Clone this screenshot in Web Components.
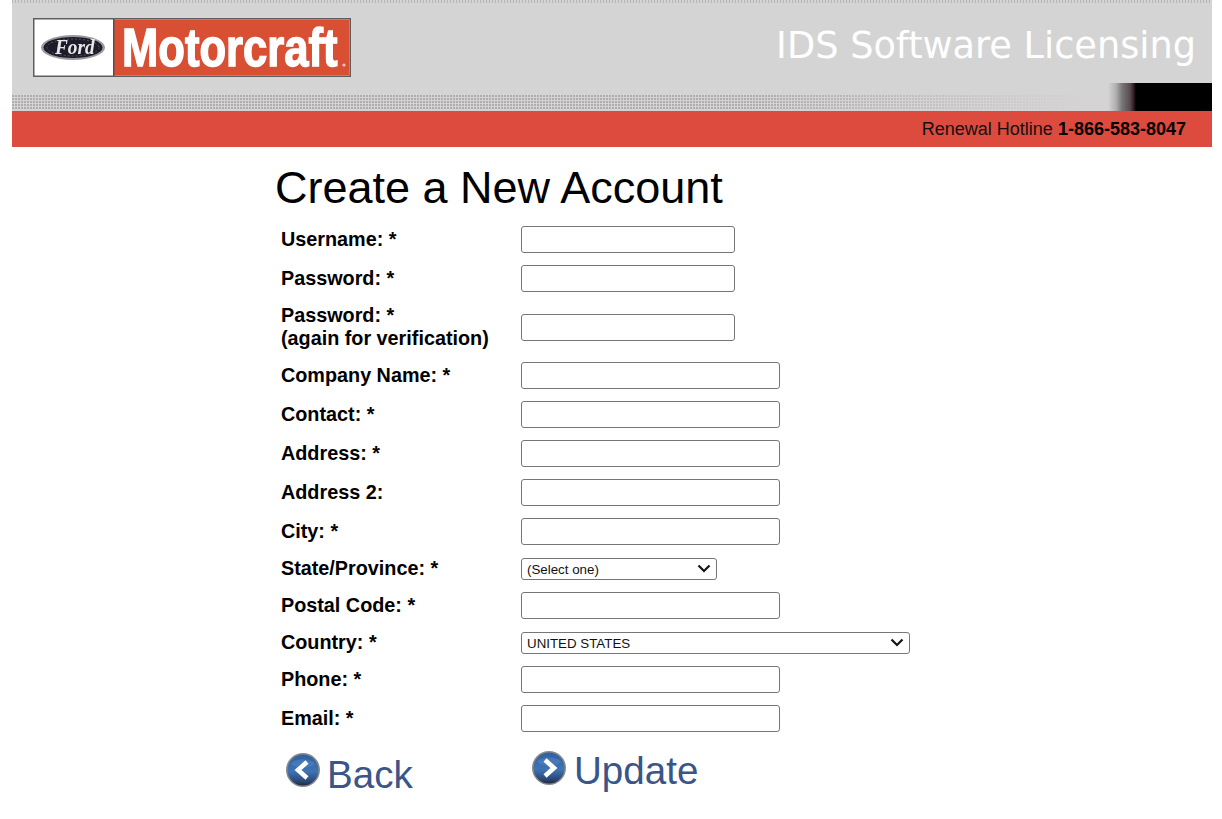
<!DOCTYPE html>
<html lang="en"><head><meta charset="utf-8"><title>IDS Software Licensing</title>
<style>
html,body{margin:0;background:#fff}
body{padding:0 10px 0 12px;font-family:"Liberation Sans",Arial,sans-serif;color:#000}
</style></head>
<body>
<site-header></site-header>
<account-form></account-form>
<script>
class SiteHeader extends HTMLElement{
  constructor(){super();this.attachShadow({mode:'open'}).innerHTML=`
<style>
:host{display:block;width:1200px}
.top{position:relative;height:111px;background:#d4d4d4;display:flex;justify-content:space-between;overflow:hidden}
.top::before{content:"";position:absolute;left:0;right:0;top:0;height:3px;background:repeating-linear-gradient(90deg,#b4b4b4 0 1px,#d4d4d4 1px 3px)}
.dots{position:absolute;left:0;top:95px;width:1070px;height:14px;
 background:radial-gradient(circle at 1px 1px,#aeaeae 0.8px,transparent 1.1px) 0 0/3px 3px;
 -webkit-mask-image:linear-gradient(90deg,#000 0,#000 70%,transparent 100%);mask-image:linear-gradient(90deg,#000 0,#000 70%,transparent 100%)}
.fade{position:absolute;right:0;top:83px;width:104px;height:28px;background:linear-gradient(90deg,#d4d4d4 0,#b0b0b0 8px,#777 14px,#5a4a50 22px,#2a1a20 26px,#000 28px)}
.logo{margin:18px 0 0 21px;height:59px;align-self:flex-start;display:block}
h1{margin:25px 16px 0 0;font:400 36.7px/42px "DejaVu Sans",Verdana,sans-serif;color:#fff;white-space:nowrap}
.bar{height:36px;background:#dd4a3e;display:flex;justify-content:flex-end;align-items:center;padding-right:26px;font-size:18px;line-height:36px;color:#111}
.bar b{margin-left:5px;color:#000}
</style>
<div class="top">
<svg class="logo" width="318" height="59" viewBox="0 0 318 59" xmlns="http://www.w3.org/2000/svg">
 <defs><filter id="soft" x="-5%" y="-5%" width="110%" height="110%"><feGaussianBlur stdDeviation=".45"/></filter></defs>
 <rect x=".75" y=".75" width="316.5" height="57.5" fill="#fff" stroke="#5e5e5e" stroke-width="1.5"/>
 <rect x="81" y="1.5" width="235.5" height="56" fill="#d94f33"/>
 <rect x="80" y="1" width="1.5" height="57" fill="#55504e"/>
 <g filter="url(#soft)">
 <ellipse cx="40" cy="29.5" rx="32" ry="12.5" fill="#9a9a9e"/>
 <ellipse cx="40" cy="29.5" rx="29.5" ry="10.5" fill="#1e1c2a"/>
 <ellipse cx="40" cy="29.5" rx="26" ry="8.5" fill="none" stroke="#6b4a5c" stroke-width="1" stroke-dasharray="2 2"/>
 <text transform="translate(22 36) scale(.92 1)" font-family="'Liberation Serif',serif" font-style="italic" font-weight="700" font-size="21" fill="#e8e8ea">Ford</text>
 <text transform="translate(89 48) scale(.8075 1)" font-family="'Liberation Sans',Arial,sans-serif" font-weight="700" font-size="54" fill="#fff" stroke="#fff" stroke-width="1.5">Motorcraft</text>
 </g>
 <circle cx="311" cy="47" r="1.6" fill="#f0c8bc"/>
</svg>
<h1>IDS Software Licensing</h1>
<div class="dots"></div><div class="fade"></div>
</div>
<div class="bar"><span>Renewal Hotline</span><b>1-866-583-8047</b></div>`}
}
customElements.define('site-header',SiteHeader);

class FormRow extends HTMLElement{
  constructor(){super();this.attachShadow({mode:'open'}).innerHTML=`
<style>
:host{display:grid;grid-template-columns:240px 1fr;align-items:center;min-height:23px}
.l{font:700 19.8px/23px "Liberation Sans",Arial,sans-serif}
.c{display:flex;align-items:center}
</style><div class="l"><slot name="label"></slot></div><div class="c"><slot></slot></div>`}
}
customElements.define('form-row',FormRow);

class TextBox extends HTMLElement{
  constructor(){super();const w=this.getAttribute('w')||259;const t=this.getAttribute('type')||'text';this.attachShadow({mode:'open'}).innerHTML=`
<style>:host{display:block}
input{display:block;box-sizing:border-box;width:${w}px;height:27px;margin:0;padding:1px 2px;border:1px solid #767676;border-radius:3px;background:#fff;font:14px "Liberation Sans",Arial,sans-serif}
</style><input type="${t}">`}
}
customElements.define('text-box',TextBox);

class SelectBox extends HTMLElement{
  constructor(){super();const w=this.getAttribute('w');const v=this.getAttribute('value');this.attachShadow({mode:'open'}).innerHTML=`
<style>:host{display:block}
.s{box-sizing:border-box;width:${w}px;height:22px;border:1px solid #767676;border-radius:3px;background:#fff;display:flex;align-items:center;justify-content:space-between;padding:0 5px 0 5px;font:13.33px/20px "Liberation Sans",Arial,sans-serif;color:#111}
span{padding-top:2px}
svg{display:block}
</style><div class="s"><span>${v}</span><svg width="14" height="9" viewBox="0 0 14 9" xmlns="http://www.w3.org/2000/svg"><path d="M1.5 1.5 7 7l5.5-5.5" fill="none" stroke="#1a1014" stroke-width="2.2"/></svg></div>`}
}
customElements.define('select-box',SelectBox);

class RoundLink extends HTMLElement{
  constructor(){super();const left=this.getAttribute('dir')==='left';this.attachShadow({mode:'open'}).innerHTML=`
<style>:host{display:flex;align-items:flex-start;color:#3a5587;font:38.6px/44px "Liberation Sans",Arial,sans-serif}
svg{display:block;margin-right:${left?6:7}px;flex:none}
span{margin-top:${left?1:-1}px}
</style>
<svg width="36" height="36" viewBox="0 0 36 36" xmlns="http://www.w3.org/2000/svg">
<defs>
<linearGradient id="g" x1="0" y1="0" x2="0" y2="1"><stop offset="0" stop-color="#2f5f9f"/><stop offset=".55" stop-color="#3f74b4"/><stop offset=".85" stop-color="#2c4a78"/><stop offset="1" stop-color="#1f2a44"/></linearGradient>
</defs>
<circle cx="18" cy="18" r="17" fill="#8a8a8a"/>
<circle cx="18" cy="18" r="15.5" fill="url(#g)"/>
<path d="M6 12C9 6 27 6 30 12 24 17 12 17 6 12Z" fill="#5d8cc6" opacity=".45"/>
<path d="${left?'M22 10 13 18l9 8':'M14 10l9 8-9 8'}" fill="none" stroke="#fff" stroke-width="4.6"/>
</svg><span><slot></slot></span>`}
}
customElements.define('round-link',RoundLink);

class AccountForm extends HTMLElement{
  constructor(){super();
  const f=(label,ctrl)=>`<form-row><span slot="label">${label}</span>${ctrl}</form-row>`;
  const tb=(w,t)=>`<text-box w="${w||259}"${t?` type="${t}"`:''}></text-box>`;
  this.attachShadow({mode:'open'}).innerHTML=`
<style>
:host{display:block;padding:14px 0 0 263px}
h2{margin:0 0 11px;font:400 45px/54px "Liberation Sans",Arial,sans-serif}
.rows{display:flex;flex-direction:column;gap:12px;padding-left:6px}
.actions{display:grid;grid-template-columns:246px auto;padding:20px 0 0 10px;align-items:start}
.u{margin-top:-2px}
</style>
<h2>Create a New Account</h2>
<div class="rows">
${f('Username: *',tb(214))}
${f('Password: *',tb(214,'password'))}
${f('Password: *<br>(again for verification)',tb(214,'password'))}
${f('Company Name: *',tb())}
${f('Contact: *',tb())}
${f('Address: *',tb())}
${f('Address 2:',tb())}
${f('City: *',tb())}
${f('State/Province: *','<select-box w="196" value="(Select one)"></select-box>')}
${f('Postal Code: *',tb())}
${f('Country: *','<select-box w="389" value="UNITED STATES"></select-box>')}
${f('Phone: *',tb())}
${f('Email: *',tb())}
</div>
<div class="actions"><round-link dir="left">Back</round-link><round-link class="u" dir="right">Update</round-link></div>`}
}
customElements.define('account-form',AccountForm);
</script>
</body></html>
